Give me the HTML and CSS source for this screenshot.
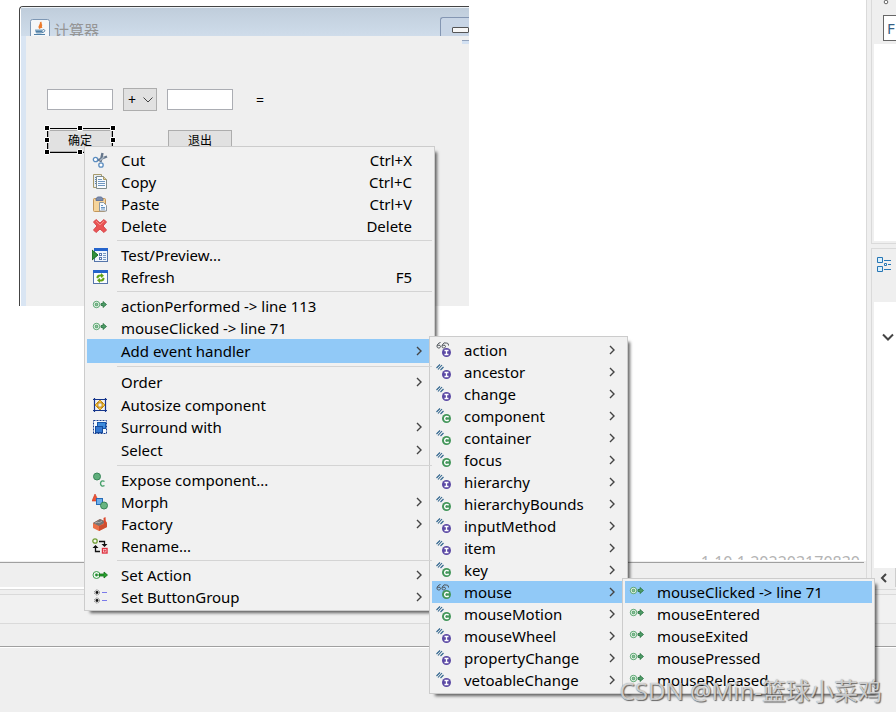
FILE: index.html
```html
<!DOCTYPE html>
<html lang="en">
<head>
<meta charset="utf-8">
<title>WindowBuilder</title>
<link rel="stylesheet" href="styles.css">
</head>
<body>
<svg class="defs" aria-hidden="true">
  <defs>
    <symbol id="chev" viewBox="0 0 8 12"><path d="M2 2l4 4-4 4" fill="none" stroke="#444" stroke-width="1.4"/></symbol>
    <symbol id="cut" viewBox="0 0 16 16"><path d="M10.500 1L8.500 10M15 4.500L5 8.500" stroke="#66778c" stroke-width="2.400"/><path d="M12 5L8 8.500" stroke="#a9b6c4" stroke-width="1.500"/><circle cx="3.500" cy="7.500" r="2.200" fill="#fff" stroke="#5b8dc0" stroke-width="1.300"/><circle cx="9" cy="13" r="2.200" fill="#fff" stroke="#5b8dc0" stroke-width="1.300"/></symbol>
    <symbol id="copy" viewBox="0 0 16 16"><path d="M1.500.5h8v13h-8z" fill="#e8eef4" stroke="#a79a6b"/><path d="M3 3.500h2M3 5.500h2M3 7.500h2M3 9.500h2" stroke="#5c87b4"/><path d="M4.500 2.500h7l3 3v9h-10z" fill="#f8fbff" stroke="#7f8c8c"/><path d="M11.500 2.500v3h3" fill="#ead28c" stroke="#a79a6b"/><path d="M6 5.500h4M6 7.500h7M6 9.500h7M6 11.500h7" stroke="#6f97c0"/></symbol>
    <symbol id="paste" viewBox="0 0 16 16"><rect x="1.500" y="2.500" width="12" height="13" rx="1" fill="#f5d49b" stroke="#c4975a"/><path d="M4 4.500h7V3L9.500 1h-4L4 3z" fill="#7d8dab" stroke="#66769a"/><path d="M7.500 6.500h4l3 3v5.500h-7z" fill="#f5faff" stroke="#8c97a0"/><path d="M9 9.500h2M9 11.500h4M9 13h4" stroke="#6795c4"/></symbol>
    <symbol id="delete" viewBox="0 0 16 16"><path d="M4 1.500L8 5l4-3.500L14.500 4 11 8l3.500 4-2.500 2.500L8 11l-4 3.500L1.500 12 5 8 1.500 4z" fill="#ea5555" stroke="#d8454a"/><path d="M4 3l4 4 4-4" fill="none" stroke="#f58d86"/></symbol>
    <symbol id="preview" viewBox="0 0 16 16"><rect x="2.500" y="1.500" width="13" height="13" fill="#eff5fc" stroke="#5575aa"/><path d="M2 1h14v3H2z" fill="#2564cc"/><path d="M7 6h3v3H7zM7 10h3v3H7z" fill="#5877ad"/><path d="M8 7h1v1H8zM8 11h1v1H8z" fill="#fff"/><path d="M11 6.500h3M11 8.500h3M11 10.500h3M11 12.500h3" stroke="#799bc5"/><path d="M0 3l6 5-6 5z" fill="#30903b" stroke="#176b27"/></symbol>
    <symbol id="refresh" viewBox="0 0 16 16"><rect x="1.500" y="1.500" width="14" height="13" fill="#fafcff" stroke="#5575aa"/><path d="M1 1h15v3H1z" fill="#2564cc"/><path d="M4.500 9c0-3 2-3.500 4.500-3.500V4L12 6.700 9 9V7.500C7 7.500 6.500 8 6.500 9.500zM12.500 9c0 3-2 3.500-4.500 3.500V14l-3-2.700L8 9v1.500c2 0 2.500-.5 2.500-2z" fill="#62a313"/></symbol>
    <symbol id="event" viewBox="0 0 16 16"><circle cx="4.500" cy="6.500" r="3.200" fill="#eef8ef" stroke="#55a36c"/><circle cx="4.500" cy="6.500" r="1.300" fill="#8cc49c" stroke="#348b4e" stroke-width=".8"/><path d="M9 5.500h2V3.500l3.500 3-3.500 3v-2H9z" fill="#4f9c69" stroke="#28743f" stroke-width=".8"/></symbol>
    <symbol id="autosize" viewBox="0 0 16 16"><path d="M2.500 1v14M13.500 1v14M1 2.500h14M1 13.500h14" stroke="#15358c" stroke-width="1.200"/><path d="M8 3l3 3H5zM8 13l3-3H5zM3 8l3-3v6zM13 8l-3-3v6z" fill="#f4c43c" stroke="#b87d0c" stroke-width=".8"/></symbol>
    <symbol id="surround" viewBox="0 0 16 16"><rect x="1.500" y="1.500" width="13" height="13" fill="#f4f8fd" stroke="#183f8e" stroke-dasharray="2 1"/><rect x="5.500" y="3.500" width="8" height="6" fill="#3e8bdb" stroke="#1756aa"/><rect x="3.500" y="7.500" width="7" height="6" fill="#3478d0" stroke="#164b9d"/></symbol>
    <symbol id="expose" viewBox="0 0 16 16"><circle cx="5" cy="4.500" r="3.500" fill="#5fae7b" stroke="#388558"/><path d="M12.500 9.500c-2-1.500-4 0-4 2s2 3.500 4 2" fill="none" stroke="#47a06a" stroke-width="1.400"/></symbol>
    <symbol id="morph" viewBox="0 0 16 16"><path d="M3 0l3.500 7H0z" fill="#ed5637" stroke="#c9341b" stroke-width=".6"/><rect x="4.500" y="4.500" width="6" height="6" fill="#6caee9" stroke="#276bb7"/><circle cx="12" cy="11.500" r="3.500" fill="#68b581" stroke="#388558"/></symbol>
    <symbol id="factory" viewBox="0 0 16 16"><path d="M1 7l7-4 7 3v5l-8 4-6-3z" fill="#eb7047"/><path d="M1 7l7-4 6 3-7 4z" fill="#747474"/><path d="M3 7l3-1 1 1 3-2" stroke="#aaa" fill="none"/><path d="M11.500 2l2-1 .5 7-2 1z" fill="#dc462a"/><path d="M7 10v5l8-4V7z" fill="#cd4e30"/></symbol>
    <symbol id="rename" viewBox="0 0 16 16"><circle cx="3" cy="3" r="2.200" fill="#f6faee" stroke="#719f36" stroke-width="1.300"/><path d="M7 3.500h5.500V7M4 13.500h4M3.500 8v5.500H8" fill="none" stroke="#111" stroke-width="1.300"/><path d="M9.500 6h6l-3 3zM.5 10h6l-3-3z" fill="#111"/><rect x="10.500" y="10.500" width="4.500" height="4.500" fill="#fff" stroke="#df3341" stroke-width="1.400"/><path d="M12.800 11.500v2.500M11.500 12.800h2.500" stroke="#df3341"/></symbol>
    <symbol id="setaction" viewBox="0 0 16 16"><circle cx="4.500" cy="8" r="3.500" fill="#eef8ef" stroke="#3e9d4d"/><circle cx="4.500" cy="8" r="1.400" fill="#218b31"/><path d="M7 7h5V5l3.500 3-3.500 3V9H7z" fill="#27a12e" stroke="#126e18" stroke-width=".8"/></symbol>
    <symbol id="group" viewBox="0 0 16 16"><circle cx="5" cy="3.500" r="2.500" fill="#eee" stroke="#777" stroke-dasharray="1.200 .8"/><circle cx="5" cy="3.500" r="1.400" fill="#111"/><circle cx="5" cy="11.500" r="2.500" fill="#eee" stroke="#777" stroke-dasharray="1.200 .8"/><circle cx="5" cy="11.500" r="1.400" fill="#111"/><path d="M10 3.500h5M10 11.500h5" stroke="#7b7bea"/></symbol>
    <symbol id="hash" viewBox="0 0 16 16"><path d="M.5 4L4 .5M2 5.500L6 1M4.500 6L7.500 3" stroke="#2d638c" stroke-width="1.100"/></symbol>
    <symbol id="glasses" viewBox="0 0 16 16"><path d="M4.500.5C2 1 1 3 1 4.500 1 6.500 4.500 6.500 4.500 4.500S1.500 3 1.200 4M9.500.5C7 1 6 3 6 4.500 6 6.500 9.500 6.500 9.500 4.500S6.500 3 6.200 4M9.500 1.500c1.500-1 3-.5 3 2" fill="none" stroke="#4b5157"/></symbol>
    <symbol id="badge-i" viewBox="0 0 16 16"><circle cx="10.500" cy="10.500" r="4.500" fill="#5b49a4"/><path d="M8.500 8.500h4M8.500 12.500h4M10.500 8.500v4" stroke="#fff" stroke-width="1.300"/></symbol>
    <symbol id="badge-c" viewBox="0 0 16 16"><circle cx="10.500" cy="10.500" r="4.500" fill="#43965a"/><path d="M12.600 9.300c-1.300-1.600-4-1-4 1.200s2.700 2.800 4 1.200" fill="none" stroke="#fff" stroke-width="1.400"/></symbol>
  </defs>
</svg>

<div class="ide">
  <div class="workspace">
    <main class="editor">
      <div class="surface">
        <section class="frame">
          <header class="titlebar">
            <svg class="java" viewBox="0 0 20 20"><rect x=".5" y=".5" width="19" height="22" rx="2" fill="#f5f7f9" stroke="#7d97b4"/><path d="M10.500 3c2 2.500-3 3-.5 6.500M12 5.500c-2 1-1 2-.5 3.500" fill="none" stroke="#ec7a2b" stroke-width="1.800"/><path d="M5 10.500h8c0 2-1 4-2 4H7c-1 0-2-2-2-4z" fill="#7fa3bf"/><path d="M6 12.500h6M4 15.500h11" stroke="#4f7fa6" stroke-width="1.200"/><path d="M13 10.500c3 0 2 3-1 3" fill="none" stroke="#4f7fa6"/></svg>
            <span class="title">计算器</span>
            <span class="minimize"><i></i></span>
          </header>
          <div class="form">
            <span class="corner"></span>
            <div class="row">
              <input class="num" type="text" aria-label="First number">
              <span class="pick"><select aria-label="Operator"><option>+</option></select><svg viewBox="0 0 10 6"><path d="M.5.5L5 5 9.500.5" fill="none" stroke="#444"/></svg></span>
              <input class="num" type="text" aria-label="Second number">
              <span class="equals">=</span>
            </div>
            <div class="row actions">
              <span class="selected"><button type="button">确定</button>
                <svg class="handles" viewBox="0 0 70 28"><path d="M2 2.500h66M2 26.500h66M2.500 2v25M67.500 2v25" stroke="#000" fill="none"/><g fill="#000" stroke="#fff"><path d="M-.5-.5h5v5h-5zM32.500-.5h5v5h-5zM65.500-.5h5v5h-5zM-.5 11.500h5v5h-5zM65.500 11.500h5v5h-5zM-.5 23.500h5v5h-5zM32.500 23.500h5v5h-5zM65.500 23.500h5v5h-5z"/></g></svg>
              </span>
              <button type="button">退出</button>
            </div>
          </div>
        </section>
        <div class="version">1.10.1.202203170830</div>
      </div>
    </main>
    <aside class="side">
      <section class="palette">
        <div class="tools"><svg viewBox="0 0 6 6"><circle cx="3" cy="2" r="1.800" fill="#fff" stroke="#666"/></svg><input type="text" value="F" aria-label="Filter"></div>
        <div class="blank"></div>
      </section>
      <section class="outline">
        <div class="outline-head"><svg viewBox="0 0 14 16"><path d="M.5 1.500h5v5h-5zM.5 10.500h5v5h-5z" fill="#d9effc" stroke="#2676b5"/><path d="M7 4.500h7M7 13.500h7M11 8.500h3" stroke="#2676b5"/><path d="M7.500 7.500h2v2h-2z" fill="#fff" stroke="#2676b5"/></svg></div>
        <div class="tree"><svg viewBox="0 0 12 8"><path d="M1 1.500L6 6.500 11 1.500" fill="none" stroke="#444" stroke-width="2"/></svg></div>
        <div class="scroll"><svg viewBox="0 0 8 10"><path d="M6 1L2 5l4 4" fill="none" stroke="#444" stroke-width="2"/></svg></div>
      </section>
    </aside>
  </div>
  <footer class="bottom"><div class="edge"></div><div class="tabs"></div><div class="strip"></div><div class="pane"></div></footer>
</div>

<ul class="menu context">
  <li><button type="button"><svg><use href="#cut"/></svg><span>Cut</span><kbd>Ctrl+X</kbd></button></li>
  <li><button type="button"><svg><use href="#copy"/></svg><span>Copy</span><kbd>Ctrl+C</kbd></button></li>
  <li><button type="button"><svg><use href="#paste"/></svg><span>Paste</span><kbd>Ctrl+V</kbd></button></li>
  <li><button type="button"><svg><use href="#delete"/></svg><span>Delete</span><kbd>Delete</kbd></button></li>
  <li class="sep"></li>
  <li><button type="button"><svg><use href="#preview"/></svg><span>Test/Preview...</span></button></li>
  <li><button type="button"><svg><use href="#refresh"/></svg><span>Refresh</span><kbd>F5</kbd></button></li>
  <li class="sep"></li>
  <li><button type="button"><svg><use href="#event"/></svg><span>actionPerformed -&gt; line 113</span></button></li>
  <li><button type="button"><svg><use href="#event"/></svg><span>mouseClicked -&gt; line 71</span></button></li>
  <li class="plain on"><button type="button"><svg></svg><span>Add event handler</span><svg class="chev"><use href="#chev"/></svg></button>
    <ul class="menu sub listeners">
      <li><button type="button"><svg><use href="#glasses"/><use href="#badge-i"/></svg><span>action</span><svg class="chev"><use href="#chev"/></svg></button></li>
      <li><button type="button"><svg><use href="#hash"/><use href="#badge-i"/></svg><span>ancestor</span><svg class="chev"><use href="#chev"/></svg></button></li>
      <li><button type="button"><svg><use href="#hash"/><use href="#badge-i"/></svg><span>change</span><svg class="chev"><use href="#chev"/></svg></button></li>
      <li><button type="button"><svg><use href="#hash"/><use href="#badge-c"/></svg><span>component</span><svg class="chev"><use href="#chev"/></svg></button></li>
      <li><button type="button"><svg><use href="#hash"/><use href="#badge-c"/></svg><span>container</span><svg class="chev"><use href="#chev"/></svg></button></li>
      <li><button type="button"><svg><use href="#hash"/><use href="#badge-c"/></svg><span>focus</span><svg class="chev"><use href="#chev"/></svg></button></li>
      <li><button type="button"><svg><use href="#hash"/><use href="#badge-i"/></svg><span>hierarchy</span><svg class="chev"><use href="#chev"/></svg></button></li>
      <li><button type="button"><svg><use href="#hash"/><use href="#badge-c"/></svg><span>hierarchyBounds</span><svg class="chev"><use href="#chev"/></svg></button></li>
      <li><button type="button"><svg><use href="#hash"/><use href="#badge-i"/></svg><span>inputMethod</span><svg class="chev"><use href="#chev"/></svg></button></li>
      <li><button type="button"><svg><use href="#hash"/><use href="#badge-i"/></svg><span>item</span><svg class="chev"><use href="#chev"/></svg></button></li>
      <li><button type="button"><svg><use href="#hash"/><use href="#badge-c"/></svg><span>key</span><svg class="chev"><use href="#chev"/></svg></button></li>
      <li class="on"><button type="button"><svg><use href="#glasses"/><use href="#badge-c"/></svg><span>mouse</span><svg class="chev"><use href="#chev"/></svg></button>
        <ul class="menu sub methods">
          <li class="on"><button type="button"><svg><use href="#event"/></svg><span>mouseClicked -&gt; line 71</span></button></li>
          <li><button type="button"><svg><use href="#event"/></svg><span>mouseEntered</span></button></li>
          <li><button type="button"><svg><use href="#event"/></svg><span>mouseExited</span></button></li>
          <li><button type="button"><svg><use href="#event"/></svg><span>mousePressed</span></button></li>
          <li><button type="button"><svg><use href="#event"/></svg><span>mouseReleased</span></button></li>
        </ul>
      </li>
      <li><button type="button"><svg><use href="#hash"/><use href="#badge-c"/></svg><span>mouseMotion</span><svg class="chev"><use href="#chev"/></svg></button></li>
      <li><button type="button"><svg><use href="#hash"/><use href="#badge-i"/></svg><span>mouseWheel</span><svg class="chev"><use href="#chev"/></svg></button></li>
      <li><button type="button"><svg><use href="#hash"/><use href="#badge-i"/></svg><span>propertyChange</span><svg class="chev"><use href="#chev"/></svg></button></li>
      <li><button type="button"><svg><use href="#hash"/><use href="#badge-i"/></svg><span>vetoableChange</span><svg class="chev"><use href="#chev"/></svg></button></li>
    </ul>
  </li>
  <li class="sep"></li>
  <li class="plain"><button type="button"><svg></svg><span>Order</span><svg class="chev"><use href="#chev"/></svg></button></li>
  <li><button type="button"><svg><use href="#autosize"/></svg><span>Autosize component</span></button></li>
  <li><button type="button"><svg><use href="#surround"/></svg><span>Surround with</span><svg class="chev"><use href="#chev"/></svg></button></li>
  <li class="plain"><button type="button"><svg></svg><span>Select</span><svg class="chev"><use href="#chev"/></svg></button></li>
  <li class="sep"></li>
  <li><button type="button"><svg><use href="#expose"/></svg><span>Expose component...</span></button></li>
  <li><button type="button"><svg><use href="#morph"/></svg><span>Morph</span><svg class="chev"><use href="#chev"/></svg></button></li>
  <li><button type="button"><svg><use href="#factory"/></svg><span>Factory</span><svg class="chev"><use href="#chev"/></svg></button></li>
  <li><button type="button"><svg><use href="#rename"/></svg><span>Rename...</span></button></li>
  <li class="sep"></li>
  <li><button type="button"><svg><use href="#setaction"/></svg><span>Set Action</span><svg class="chev"><use href="#chev"/></svg></button></li>
  <li><button type="button"><svg><use href="#group"/></svg><span>Set ButtonGroup</span><svg class="chev"><use href="#chev"/></svg></button></li>
</ul>
<div class="watermark">CSDN @Min-篮球小菜鸡</div>
</body>
</html>
```
FILE: styles.css
```css
* { box-sizing: border-box; }
body {
  margin: 0;
  background: #efefef;
  color: #000;
  font: 15px/22px "Noto Sans", "Noto Sans CJK SC", sans-serif;
}
button, input, select { font: inherit; color: inherit; border-radius: 0; }
svg { display: block; flex: none; }
.defs { position: absolute; width: 0; height: 0; }

.ide { display: flex; flex-direction: column; min-height: 100vh; }
.workspace { display: flex; flex: 1; }
.editor { flex: 1; display: flex; flex-direction: column; padding: 0 2px 24px 0; background: linear-gradient(#fff, #fff) top / 100% calc(100% - 26px) no-repeat, #efefef; border-bottom: 2px solid #fff; }
.surface { flex: 1; display: flex; flex-direction: column; padding: 6px 0 2px 19px; border-bottom: 1px solid #a0a0a0; }
.version { height: 6px; margin: auto 4px 0 0; overflow: hidden; text-align: right; font-size: 16px; line-height: 16px; color: #b4b4b4; }

.frame { width: 450px; height: 300px; display: flex; flex-direction: column; padding-left: 6px; border: solid #444; border-width: 1px 0 0 1px; border-top-left-radius: 4px; background: linear-gradient(90deg, #fff 1px, #d9e5f3 1px); overflow: hidden; }
.titlebar { height: 29px; display: flex; padding: 12px 0 0 4px; margin-left: -5px; background: linear-gradient(#bfcddb, #cfdcea); box-shadow: inset 0 1px #eef3f8; overflow: hidden; }
.java { width: 20px; height: 20px; margin-left: 5px; }
.title { flex: 1; margin-left: 4px; color: #959595; line-height: 22px; }
.minimize { width: 29px; height: 30px; margin-top: -2px; padding: 9px 0 0 11px; border: 1px solid #8496b2; border-right: 0; border-top-left-radius: 3px; background: #c8d5e5; }
.minimize i { display: block; height: 6px; border: 1px solid #555; border-radius: 1px; background: #f6f6f6; }
.form { position: relative; flex: 1; padding: 52px 0 0 21px; background: #efefef; font-size: 12px; }
.corner { position: absolute; top: 0; right: 0; width: 7px; height: 8px; border-bottom: 3px solid #d3e1f2; box-shadow: inset 0 -1px #91a2bc; }
.row { display: flex; align-items: center; gap: 10px; height: 23px; }
.num { width: 66px; height: 21px; border: 1px solid #abadb3; background: #fff; }
.pick { position: relative; }
.pick select { display: block; width: 34px; height: 23px; padding: 0 4px; border: 1px solid #adadad; background: #e1e1e1; appearance: none; font-size: 14px; line-height: 20px; }
.pick svg { position: absolute; right: 4px; top: 9px; width: 10px; height: 6px; }
.equals { margin-left: 13px; font-size: 14px; }
.actions { margin-top: 18px; gap: 56px; padding-left: 1px; }
.actions button { display: block; width: 64px; height: 22px; padding: 0; border: 1px solid #adadad; background: #e1e1e1; line-height: 20px; }
.selected { position: relative; }
.handles { position: absolute; left: -3px; top: -4px; width: 70px; height: 28px; overflow: visible; }

.side { width: 30px; display: flex; flex-direction: column; gap: 4px; padding-left: 4px; border-left: 1px solid #dadada; background: #efefef; overflow: hidden; }
.palette { height: 244px; display: flex; flex-direction: column; padding: 0 0 2px 2px; border: solid #dadada; border-width: 0 0 1px 1px; }
.tools { height: 44px; padding-left: 9px; }
.tools svg { width: 6px; height: 6px; }
.tools input { display: block; width: 30px; height: 26px; margin-top: 9px; padding: 0 3px; border: 1px solid #666; background: #fff; color: #355f86; }
.blank { flex: 1; background: #fff; }
.outline { flex: 1; display: flex; flex-direction: column; padding: 0 0 2px 2px; border: solid #dadada; border-width: 1px 0 0 1px; }
.outline-head { height: 53px; padding: 7px 0 0 3px; }
.outline-head svg { width: 14px; height: 16px; }
.tree { flex: 1; padding: 31px 0 0 8px; background: #fff; }
.tree svg { width: 12px; height: 8px; }
.scroll { height: 19px; margin-right: 1px; padding: 5px 0 0 6px; box-shadow: 1px 0 #cdcdcd; }
.scroll svg { width: 8px; height: 10px; }

.bottom { display: flex; flex-direction: column; }
.edge { height: 5px; border-top: 1px solid #dadada; }
.tabs { height: 29px; border-top: 1px solid #dadada; background: #f1f1f1; }
.strip { height: 23px; border-top: 1px solid #dadada; }
.pane { height: 66px; border-top: 1px solid #a0a0a0; box-shadow: inset 0 1px #fff; }

.menu { position: absolute; margin: 0; padding: 2px; list-style: none; background: #f1f1f1; border: 1px solid #ccc; box-shadow: 4px 4px 3px -2px rgba(0, 0, 0, .6); }
.menu li { position: relative; }
.menu button { display: flex; align-items: center; width: 100%; height: 22px; padding: 0 5px; border: 0; background: none; text-align: left; white-space: nowrap; }
.menu button svg { width: 16px; height: 16px; }
.menu span { flex: 1; margin-left: 13px; }
.menu kbd { margin-right: 15px; font: inherit; }
.menu .plain > button { height: 24px; }
.menu .on > button { background: #91c9f7; }
.menu .sep { height: 7px; margin-left: 30px; padding-top: 3px; }
.menu .sep::before { content: ""; display: block; height: 1px; background: #d4d4d4; }
.menu button .chev { width: 8px; height: 12px; margin-right: 4px; }
.context { left: 84px; top: 146px; width: 351px; }
.sub { left: calc(100% - 3px); top: -3px; }
.menu .sub button { padding: 0 5px 0 4px; }
.menu .sub span { margin-left: 12px; }
.listeners { width: 199px; }
.methods { width: 253px; }

.watermark { position: absolute; right: 14px; bottom: 4px; font-size: 24px; line-height: 34px; color: rgba(240, 240, 240, .75); text-shadow: 1px 1px 1px rgba(60, 60, 60, .75), 0 0 1px rgba(80, 80, 80, .7); white-space: nowrap; }
```
